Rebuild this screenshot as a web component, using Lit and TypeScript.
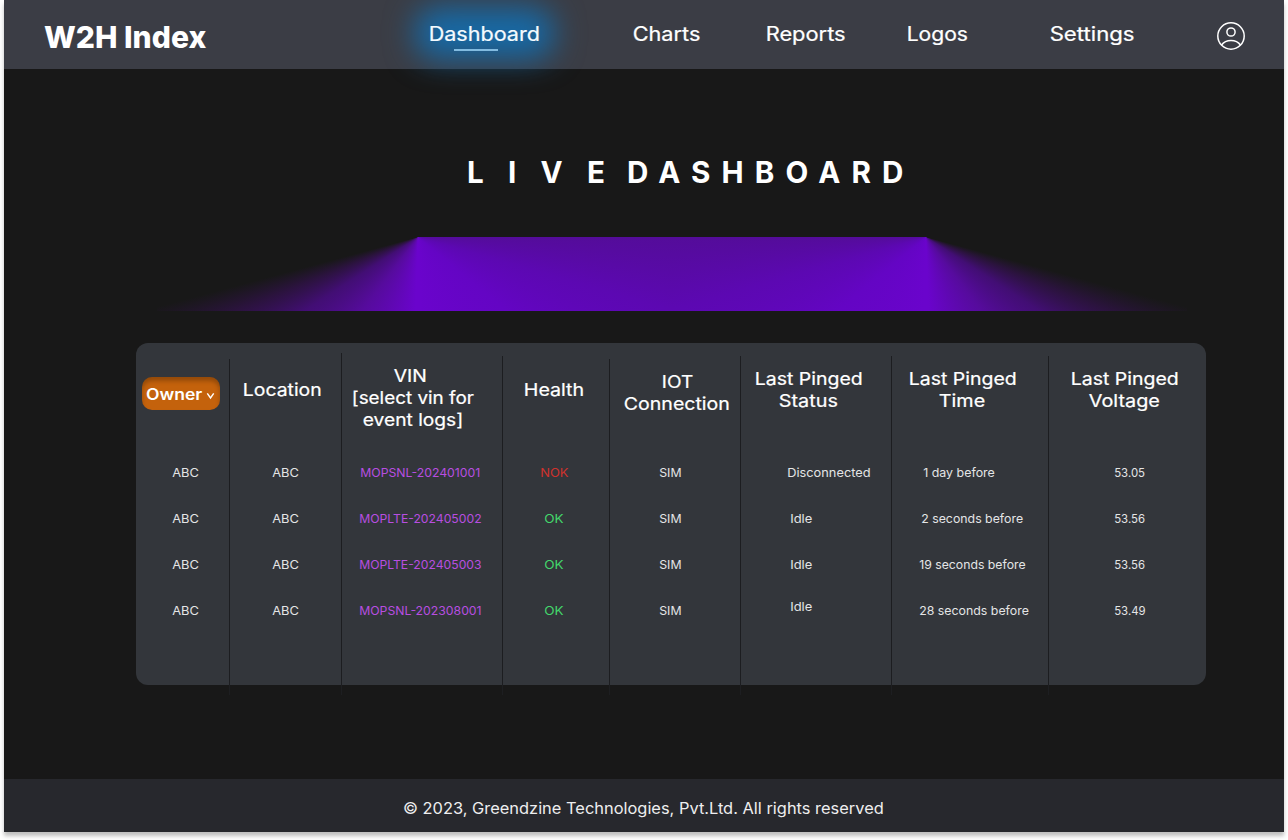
import { LitElement, html, css, svg } from "lit";
import { customElement, property, state } from "lit/decorators.js";

type Label = [text: string, start: number, end: number];

interface Column {
  width: number;
  rule: number;
  top: number;
  head: Label[];
  cells: Label[];
  tone?: string;
}

// Starts and ends are measured from the left edge of each column.
const COLUMNS: Column[] = [
  { width: 93, rule: 0, top: 34, head: [], cells: [["ABC", 37, 62.3], ["ABC", 37, 62.3], ["ABC", 37, 62.3], ["ABC", 37, 62.3]] },
  { width: 112, rule: 16, top: 36, head: [["Location", 15, 91.8]], cells: [["ABC", 44, 69.3], ["ABC", 44, 69.3], ["ABC", 44, 69.3], ["ABC", 44, 69.3]] },
  {
    width: 161, rule: 10, top: 22, tone: "vin",
    head: [["VIN", 54, 85], ["[select vin for", 12, 132], ["event logs]", 23, 121.3]],
    cells: [["MOPSNL-202401001", 20, 138.7], ["MOPLTE-202405002", 19, 140], ["MOPLTE-202405003", 19, 140], ["MOPSNL-202308001", 19, 140]],
  },
  { width: 107, rule: 13, top: 36, tone: "health", head: [["Health", 23, 81.3]], cells: [["NOK", 39, 66], ["OK", 43, 61], ["OK", 43, 61], ["OK", 43, 61]] },
  { width: 131, rule: 16, top: 28, head: [["IOT", 54, 83.3], ["Connection", 16, 120]], cells: [["SIM", 51, 72], ["SIM", 51, 72], ["SIM", 51, 72], ["SIM", 51, 72]] },
  { width: 151, rule: 13, top: 25, tone: "status", head: [["Last Pinged", 16, 121.8], ["Status", 40, 97]], cells: [["Disconnected", 48, 130], ["Idle", 51, 71.7], ["Idle", 51, 71.7], ["Idle", 50.5, 71.2]] },
  { width: 157, rule: 13, top: 25, head: [["Last Pinged", 19, 124.8], ["Time", 49, 93.3]], cells: [["1 day before", 32.5, 102.7], ["2 seconds before", 31, 131.5], ["19 seconds before", 28.5, 133.5], ["28 seconds before", 29, 137.3]] },
  { width: 158, rule: 13, top: 25, head: [["Last Pinged", 24, 129.8], ["Voltage", 42, 111]], cells: [["53.05", 67, 96.4], ["53.56", 67, 96.4], ["53.56", 67, 96.4], ["53.49", 67, 97]] },
];

const NAV: Label[] = [
  ["Dashboard", 426, 535],
  ["Charts", 630, 695.4],
  ["Reports", 763, 840.7],
  ["Logos", 904, 963],
  ["Settings", 1047, 1129.6],
];

/** A single line of text set to an exact measure. */
@customElement("fit-text")
class FitText extends LitElement {
  @property() text = "";
  @property() adjust = "spacingAndGlyphs";
  @property({ type: Number }) measure = 0;
  @property({ type: Number }) size = 16;
  @property({ type: Number }) line = 22;
  @property({ type: Number }) base = 17;

  static styles = css`
    :host { display: block; flex: none; }
    svg { display: block; overflow: visible; }
    text { fill: currentColor; stroke: currentColor; stroke-width: var(--grade, 0); font-family: inherit; font-weight: inherit; }
  `;

  render() {
    const bearing = this.size * 0.07;
    return html`<svg width=${this.measure} height=${this.line}>
      ${svg`<text x=${-bearing} y=${this.base} font-size=${this.size}
        textLength=${this.measure + bearing * 1.7} lengthAdjust=${this.adjust}>${this.text}</text>`}
    </svg>`;
  }
}

@customElement("app-root")
class AppRoot extends LitElement {
  @state() private active = "Dashboard";

  static styles = css`
    :host { display: block; height: 840px; overflow: hidden; background: #fff; font-family: Inter, "Open Sans", sans-serif; color: #fff; }
    .screen { display: flex; flex-direction: column; height: 832px; margin: 0 4px; background: #181818; box-shadow: 0 4px 4px rgba(0, 0, 0, 0.25); }
    header { height: 69px; display: flex; background: #3b3d45; position: relative; z-index: 1; }
    .brand { width: 421px; box-sizing: border-box; padding: 19px 0 0 42px; font-weight: 800; }
    nav { width: 792px; display: flex; font-weight: 400; --grade: 0.22px; }
    .tab { position: relative; padding-top: 23px; flex: none; }
    .tab fit-text { position: relative; }
    .active { color: #f4fbff; }
    .active::before { content: ""; position: absolute; left: -15px; right: -15px; top: 7px; height: 52px; border-radius: 22px; background: #1769a5; filter: blur(15px); }
    .active::after { content: ""; position: absolute; left: 24px; width: 44px; top: 49px; height: 2px; background: #82bbe0; }
    .avatar { display: block; margin-top: 22px; width: 28px; height: 28px; fill: none; stroke: #fff; stroke-width: 1.5; }
    main { flex: 1; display: flex; flex-direction: column; align-items: flex-start; }
    h1 { margin: 87px 0 0 464.500px; display: flex; gap: 26px; font-size: inherit; font-weight: 700; height: 34px; }
    .lamp { display: flex; width: 1030px; height: 74px; margin: 47px 0 0 153px; }
    .beam { width: 515px; height: 74px; }
    .left { background: conic-gradient(at 261px 0, #540c9a 90deg, #5c08b2 106deg, #6405c4 130deg, #6a04cc 178deg, #6a04cc 182deg, #560b9d 217deg, #420e74 237deg, #2b133e 248deg, #181818 255deg, #181818 360deg); }
    .right { background: conic-gradient(at 254px 0, #181818 105deg, #2b133e 112deg, #420e74 123deg, #560b9d 143deg, #6a04cc 178deg, #6a04cc 182deg, #6405c4 230deg, #5c08b2 254deg, #540c9a 270deg, #181818 270deg); }
    .card { display: flex; width: 1070px; height: 342px; margin: 32px 0 0 132px; border-radius: 12px; background: #33363b; }
    .col { position: relative; flex: none; }
    .rule { position: absolute; left: 0; width: 1px; bottom: 0; background: #1c1d20; }
    .rule::after { content: ""; position: absolute; left: 0; top: 100%; width: 1px; height: 10px; background: #1d1e21; }
    .head { height: 107px; box-sizing: border-box; font-weight: 400; --grade: 0.22px; }
    .cell { height: 46px; display: flex; align-items: center; color: #e4e5e6; font-weight: 400; }
    .vin .cell { color: #b84ee0; }
    .health .cell { color: #43d66b; }
    .health .bad { color: #cf322d; }
    .status .cell:last-of-type { padding-bottom: 8px; height: 38px; }
    .owner { --grade: 0; display: flex; width: 78px; height: 33px; margin-left: 6px; padding: 6px 0 0 5px; box-sizing: border-box; border: 0; border-radius: 10px; background: #c4620c; box-shadow: inset 0 4px 4px rgba(0, 0, 0, 0.25); color: #fff; font: 600 16px Inter, sans-serif; gap: 5px; }
    .owner svg { width: 7px; height: 6px; margin-top: 10px; fill: none; stroke: #fff; stroke-width: 1.4; overflow: visible; }
    footer { height: 53px; box-sizing: border-box; padding: 18px 0 0 400px; background: #27282d; color: #eeeeef; font-weight: 400; }
  `;

  private label([text, start, end]: Label, size: number, line: number, base: number, from = 0) {
    return html`<fit-text style="margin-left:${start - from}px" .text=${text} .measure=${end - start}
      .size=${size} .line=${line} .base=${base}></fit-text>`;
  }

  private column(c: Column) {
    return html`<section class="col ${c.tone ?? ""}" style="width:${c.width}px">
      ${c.rule ? html`<i class="rule" style="top:${c.rule}px"></i>` : ""}
      <div class="head" style="padding-top:${c.top}px">
        ${c.head.length
          ? c.head.map((l) => this.label(l, 17.6, 22, 17))
          : html`<button class="owner">
              <fit-text .text=${"Owner"} .measure=${54.5} .size=${15.6} .line=${22} .base=${17}></fit-text>
              <svg viewBox="0 0 7 6"><path d="M.3.3 3.5 4.900 6.7.3" /></svg>
            </button>`}
      </div>
      ${c.cells.map((l) => html`<div class="cell ${l[0] === "NOK" ? "bad" : ""}">${this.label(l, 11.7, 16, 12)}</div>`)}
    </section>`;
  }

  render() {
    return html`<div class="screen">
      <header>
        <div class="brand"><fit-text .text=${"W2H Index"} .measure=${158.8} .size=${30.2} .line=${36} .base=${29}></fit-text></div>
        <nav>
          ${NAV.map((n, i) => html`<a class="tab ${n[0] === this.active ? "active" : ""}"
            style="margin-left:${i ? n[1] - NAV[i - 1][2] : n[1] - 421}px" @click=${() => (this.active = n[0])}>
            ${this.label([n[0], 0, n[2] - n[1]], 19.5, 24, 18)}</a>`)}
        </nav>
        <svg class="avatar" viewBox="0 0 28 28">
          <circle cx="14" cy="14" r="13.2" /><circle cx="14" cy="10" r="4.1" />
          <path d="M4.400 23.200C6.700 20 10 18.500 14 18.500s7.300 1.500 9.600 4.700" />
        </svg>
      </header>
      <main>
        <h1>
          <fit-text adjust="spacing" .text=${"L I V E"} .measure=${134.5} .size=${29.6} .line=${34} .base=${27}></fit-text>
          <fit-text adjust="spacing" .text=${"DASHBOARD"} .measure=${273} .size=${29.6} .line=${34} .base=${27}></fit-text>
        </h1>
        <div class="lamp"><div class="beam left"></div><div class="beam right"></div></div>
        <div class="card">${COLUMNS.map((c) => this.column(c))}</div>
      </main>
      <footer><fit-text .text=${"© 2023, Greendzine Technologies, Pvt.Ltd. All rights reserved"} .measure=${479} .size=${15.5} .line=${22} .base=${17}></fit-text></footer>
    </div>`;
  }
}
